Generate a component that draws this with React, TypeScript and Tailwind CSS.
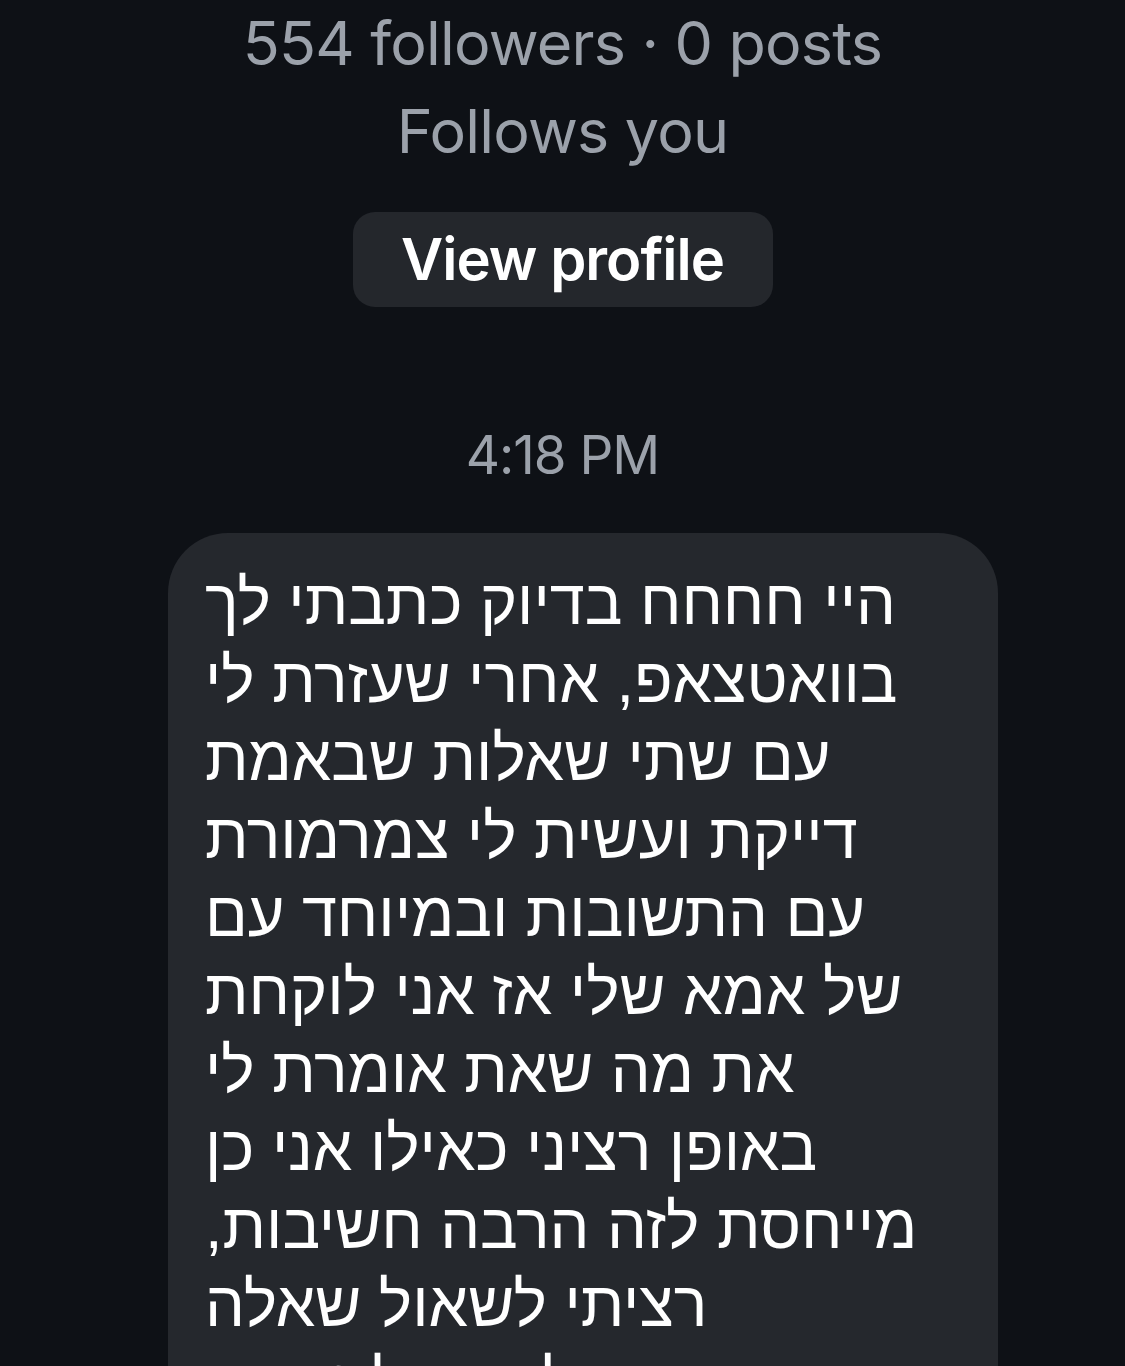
import React from 'react';

const lines = [
  'היי חחחח בדיוק כתבתי לך',
  'בוואטצאפ, אחרי שעזרת לי',
  'עם שתי שאלות שבאמת',
  'דייקת ועשית לי צמרמורת',
  'עם התשובות ובמיוחד עם',
  'של אמא שלי אז אני לוקחת',
  'את מה שאת אומרת לי',
  'באופן רציני כאילו אני כן',
  'מייחסת לזה הרבה חשיבות,',
  'רציתי לשאול שאלה',
  'נוספת לגבי הלימודים',
];

export default function App() {
  return (
    <div className="h-[1366px] w-full overflow-hidden bg-[#0e1116] font-['Inter','Liberation_Sans',sans-serif]">
      <div className="flex flex-col items-center">
        <p className="mt-[-1px] text-[61px] leading-[88px] tracking-[-0.8px] text-[#9ba1aa]">554 followers · 0 posts</p>
        <p className="text-[61px] leading-[88px] tracking-[-0.8px] text-[#9ba1aa]">Follows you</p>
        <button
          type="button"
          className="mt-[37px] flex h-[95px] w-[420px] items-center justify-center rounded-[22px] bg-[#24272c] text-[58px] font-semibold tracking-[-1px] text-white"
        >
          View profile
        </button>
        <p className="mt-[116px] text-[53px] leading-[64px] tracking-[-1px] text-[#9ba1aa]">4:18 PM</p>
      </div>
      <div className="mx-[168px] mt-[46px] w-[830px] rounded-[60px] bg-[#25282d] px-[37px] pt-[30px] pb-10">
        {lines.map((line) => (
          <p
            key={line}
            dir="rtl"
            className="w-fit text-left font-['Liberation_Sans','DejaVu_Sans',sans-serif] text-[63px] leading-[78px] text-white"
          >
            {line}
          </p>
        ))}
      </div>
    </div>
  );
}
